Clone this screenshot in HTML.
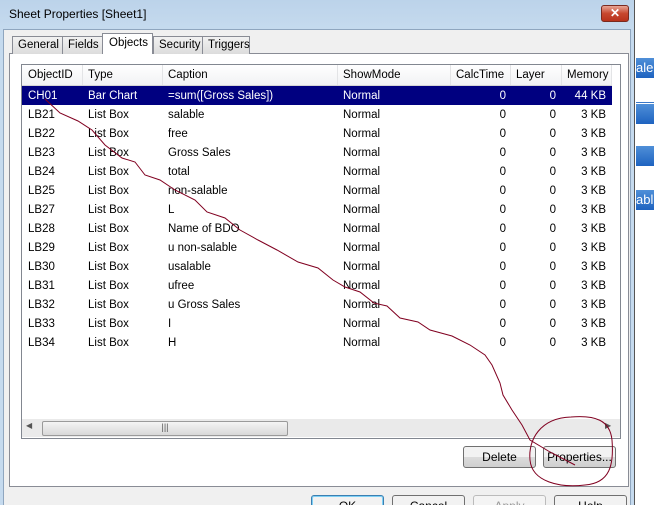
<!DOCTYPE html>
<html style="width:654px;height:505px;overflow:hidden"><head><meta charset="utf-8"><style>
*{margin:0;padding:0;box-sizing:border-box}
body{width:654px;height:505px;overflow:hidden;background:#fff;font-family:"Liberation Sans",sans-serif;font-size:11px;color:#000;position:relative}
.abs{position:absolute}
.dlg{left:0;top:0;width:635px;height:505px;background:linear-gradient(#bcd3ea,#c5daee 28px);border-right:1px solid #555}
.body{left:3px;top:29px;width:628px;height:476px;background:#f0f0f0;border:1px solid #8fa6bf;border-bottom:none}
.tab{top:36px;height:18px;border:1px solid #898c95;border-bottom:none;background:linear-gradient(#f2f2f2,#dcdcdc);font-size:11.5px;padding:2px 0 0 5px;color:#000}
.panel{left:9px;top:53px;width:620px;height:434px;background:#fff;border:1px solid #898c95}
.list{left:21px;top:64px;width:600px;height:375px;border:1px solid #828790;background:#fff}
.hdr{left:22px;top:65px;width:590px;height:21px;background:linear-gradient(#fff,#f1f2f4);border-bottom:1px solid #d5d5d5}
.hdr span,.row span{position:absolute;top:4px;font-size:11.5px}
.sep{position:absolute;top:0;width:1px;height:20px;background:#e3e4e6}
.row{position:absolute;left:22px;width:590px;height:19px}
.sel{background:#000080;color:#fff}
.r{text-align:right}
.btn{height:22px;border:1px solid #707070;border-radius:3px;background:linear-gradient(#f2f2f2 50%,#dcdcdc 50%,#cfcfcf);font-size:12px;text-align:center;line-height:20px}
</style></head><body>
<div class="abs" style="left:635px;top:0;width:19px;height:505px;background:#fff"></div>
<div class="abs" style="left:636px;top:58px;width:18px;height:20px;background:linear-gradient(#4f8fd8,#1e63c0);color:#fff;font-size:13px;padding-top:2px">ale</div>
<div class="abs" style="left:636px;top:102px;width:18px;height:1px;background:#3a78c8"></div>
<div class="abs" style="left:636px;top:104px;width:18px;height:20px;background:linear-gradient(#4f8fd8,#1e63c0)"></div>
<div class="abs" style="left:636px;top:146px;width:18px;height:20px;background:linear-gradient(#4f8fd8,#1e63c0)"></div>
<div class="abs" style="left:636px;top:190px;width:18px;height:20px;background:linear-gradient(#4f8fd8,#1e63c0);color:#fff;font-size:13px;padding-top:2px">abl</div>
<div class="abs dlg"></div>
<div class="abs" style="left:9px;top:7px;font-size:12px">Sheet Properties [Sheet1]</div>
<div class="abs" style="left:601px;top:5px;width:28px;height:17px;border:1px solid #7a2a20;border-radius:3px;background:linear-gradient(#e8a595,#c7472f 50%,#b8321c);color:#fff;font-weight:bold;font-size:12px;text-align:center;line-height:15px">✕</div>
<div class="abs body"></div>
<div class="abs panel"></div>
<div class="abs tab" style="left:12px;width:51px">General</div>
<div class="abs tab" style="left:62px;width:41px">Fields</div>
<div class="abs tab" style="left:153px;width:50px">Security</div>
<div class="abs tab" style="left:202px;width:48px">Triggers</div>
<div class="abs tab" style="left:102px;top:33px;height:21px;width:51px;background:#fff;padding-left:6px;padding-top:3px">Objects</div>
<div class="abs list"></div>
<div class="abs hdr">
<span style="left:6px">ObjectID</span><span style="left:66px">Type</span><span style="left:146px">Caption</span><span style="left:321px">ShowMode</span><span style="left:434px">CalcTime</span><span style="left:494px">Layer</span><span style="left:545px">Memory</span>
<div class="sep" style="left:60px"></div><div class="sep" style="left:140px"></div><div class="sep" style="left:315px"></div><div class="sep" style="left:428px"></div><div class="sep" style="left:488px"></div><div class="sep" style="left:539px"></div><div class="sep" style="left:589px"></div>
</div>
<div id="rows"></div>
<div class="abs" style="left:22px;top:419px;width:598px;height:18px;background:#eaeaea"></div>
<div class="abs" style="left:26px;top:421px;font-size:8px;color:#555">◀</div>
<div class="abs" style="left:42px;top:421px;width:246px;height:15px;border:1px solid #9a9a9a;border-radius:2px;background:linear-gradient(#f4f4f4,#d8d8d8);font-size:9px;text-align:center;color:#555">|||</div>
<div class="abs" style="left:605px;top:421px;font-size:8px;color:#555">▶</div>
<div class="abs btn" style="left:463px;top:446px;width:73px">Delete</div>
<div class="abs btn" style="left:543px;top:446px;width:73px">Properties...</div>
<div class="abs btn" style="left:311px;top:495px;width:73px;border-color:#3c7fb1;box-shadow:inset 0 0 0 1px #7ed0f5">OK</div>
<div class="abs btn" style="left:392px;top:495px;width:73px">Cancel</div>
<div class="abs btn" style="left:473px;top:495px;width:73px;color:#999;border-color:#bbb;background:#f4f4f4">Apply</div>
<div class="abs btn" style="left:554px;top:495px;width:73px">Help</div>
<svg class="abs" style="left:0;top:0" width="654" height="505"><g fill="none" stroke="#800020" stroke-width="1">
<path d="M45,99 L60,113 L78,121 L92,130 L105,145 L122,158 L135,162 L145,175 L160,180 L175,190 L195,200 L207,212 L225,218 L240,230 L258,240 L277,250 L298,262 L318,268 L333,280 L345,287 L360,292 L374,303 L387,306 L400,318 L418,322 L430,330 L452,336 L470,345 L485,355 L492,365 L500,383 L503,395 L512,410 L522,425 L530,440 L550,452 L575,465"/>
<path d="M571,417 C540,418 528,440 530,460 C532,482 560,488 585,485 C610,483 614,465 612,440 C610,420 595,415 571,417 Z"/>
</g></svg>
<script>
var d=[["CH01","Bar Chart","=sum([Gross Sales])","44 KB"],["LB21","List Box","salable"],["LB22","List Box","free"],["LB23","List Box","Gross Sales"],["LB24","List Box","total"],["LB25","List Box","non-salable"],["LB27","List Box","L"],["LB28","List Box","Name of BDO"],["LB29","List Box","u non-salable"],["LB30","List Box","usalable"],["LB31","List Box","ufree"],["LB32","List Box","u Gross Sales"],["LB33","List Box","I"],["LB34","List Box","H"]];
var h="";d.forEach(function(r,i){h+='<div class="row'+(i?'':' sel')+'" style="top:'+(86+i*19)+'px"><span style="left:6px">'+r[0]+'</span><span style="left:66px">'+r[1]+'</span><span style="left:146px">'+r[2]+'</span><span style="left:321px">Normal</span><span class="r" style="right:106px">0</span><span class="r" style="right:56px">0</span><span class="r" style="right:6px">'+(r[3]||"3 KB")+'</span></div>';});
document.getElementById("rows").innerHTML=h;
</script>
</body></html>
